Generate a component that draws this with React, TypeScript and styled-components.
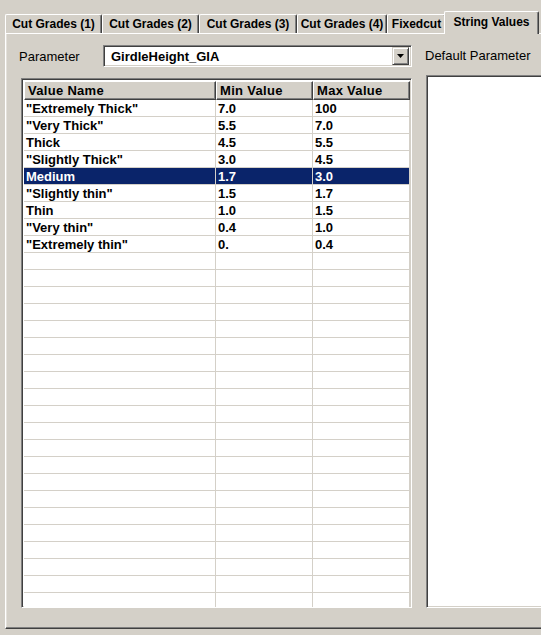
import styled, { createGlobalStyle } from 'styled-components';

const GlobalStyle = createGlobalStyle`
  html, body {
    margin: 0;
    padding: 0;
    background: #d4d0c8;
    overflow: hidden;
  }
  body {
    font-family: "Liberation Sans", Arial, sans-serif;
    color: #000;
  }
`;

interface RowData {
  name: string;
  min: string;
  max: string;
}

const rows: RowData[] = [
  { name: '"Extremely Thick"', min: '7.0', max: '100' },
  { name: '"Very Thick"', min: '5.5', max: '7.0' },
  { name: 'Thick', min: '4.5', max: '5.5' },
  { name: '"Slightly Thick"', min: '3.0', max: '4.5' },
  { name: 'Medium', min: '1.7', max: '3.0' },
  { name: '"Slightly thin"', min: '1.5', max: '1.7' },
  { name: 'Thin', min: '1.0', max: '1.5' },
  { name: '"Very thin"', min: '0.4', max: '1.0' },
  { name: '"Extremely thin"', min: '0.', max: '0.4' },
];

const SELECTED = 4;
const TOTAL_ROWS = 30;

const tabs = [
  { label: 'Cut Grades (1)', width: 97 },
  { label: 'Cut Grades (2)', width: 97 },
  { label: 'Cut Grades (3)', width: 98 },
  { label: 'Cut Grades (4)', width: 90 },
  { label: 'Fixedcut', width: 59 },
  { label: 'String Values', width: 95, active: true },
];

const Window = styled.div`
  width: 541px;
  height: 635px;
  padding-top: 11px;
  box-sizing: border-box;
  overflow: hidden;
`;

const TabRow = styled.div`
  display: flex;
  align-items: flex-end;
  padding-left: 5px;
  height: 22px;
  position: relative;
  z-index: 2;
`;

const Tab = styled.div<{ $width: number; $active?: boolean }>`
  box-sizing: border-box;
  flex: none;
  width: ${(p) => p.$width}px;
  height: ${(p) => (p.$active ? 23 : 19)}px;
  margin: ${(p) => (p.$active ? '0 -1px -1px -2px' : '0')};
  padding-top: ${(p) => (p.$active ? 3 : 2)}px;
  background: #d4d0c8;
  border-top: 1px solid #fff;
  border-left: 1px solid #fff;
  border-right: 1px solid #404040;
  box-shadow: inset -1px 0 0 #808080;
  border-radius: 2px 2px 0 0;
  font-size: 12px;
  font-weight: bold;
  text-align: center;
  white-space: nowrap;
  overflow: hidden;
`;

const Panel = styled.div`
  margin-left: 5px;
  height: 596px;
  box-sizing: border-box;
  border-top: 1px solid #fff;
  border-left: 1px solid #fff;
  border-bottom: 1px solid #404040;
  box-shadow: inset 0 -1px 0 #808080, inset 1px 0 0 #e4e1db;
  display: flex;
  padding: 11px 0 0 13px;
`;

const LeftCol = styled.div`
  width: 393px;
  display: flex;
  flex-direction: column;
`;

const ParamRow = styled.div`
  display: flex;
  align-items: center;
  height: 22px;
`;

const Label = styled.div`
  font-size: 13px;
  width: 84px;
  flex: none;
`;

const Combo = styled.div`
  box-sizing: border-box;
  width: 309px;
  height: 22px;
  background: #fff;
  border-top: 1px solid #808080;
  border-left: 1px solid #808080;
  border-right: 1px solid #fff;
  border-bottom: 1px solid #fff;
  box-shadow: inset 1px 1px 0 #404040, inset -1px -1px 0 #d4d0c8;
  display: flex;
  align-items: center;
  padding: 0 2px 0 7px;
  font-size: 13px;
  font-weight: bold;
`;

const ComboText = styled.div`
  flex: 1;
`;

const DropButton = styled.div`
  box-sizing: border-box;
  width: 17px;
  height: 18px;
  background: #d4d0c8;
  border-top: 1px solid #d4d0c8;
  border-left: 1px solid #d4d0c8;
  border-right: 1px solid #404040;
  border-bottom: 1px solid #404040;
  box-shadow: inset 1px 1px 0 #fff, inset -1px -1px 0 #808080;
  display: flex;
  align-items: center;
  justify-content: center;
`;

const Grid = styled.div`
  margin: 11px 0 0 2px;
  width: 391px;
  height: 530px;
  box-sizing: border-box;
  background: #fff;
  border-top: 1px solid #808080;
  border-left: 1px solid #808080;
  border-right: 1px solid #fff;
  border-bottom: 1px solid #fff;
  box-shadow: inset 1px 1px 0 #404040, inset -1px -1px 0 #d4d0c8;
  padding: 2px 2px 1px 2px;
  overflow: hidden;
`;

const GridRow = styled.div<{ $selected?: boolean }>`
  display: grid;
  grid-template-columns: 192px 97px 97px;
  height: 17px;
  background: ${(p) => (p.$selected ? '#0a246a' : '#fff')};
  color: ${(p) => (p.$selected ? '#fff' : '#000')};
`;

const HeaderRow = styled.div`
  display: grid;
  grid-template-columns: 192px 97px 97px;
  height: 19px;
`;

const HeaderCell = styled.div`
  box-sizing: border-box;
  background: #d4d0c8;
  border-top: 1px solid #fff;
  border-left: 1px solid #fff;
  border-right: 1px solid #404040;
  border-bottom: 1px solid #404040;
  box-shadow: inset -1px -1px 0 #808080;
  font-size: 13px;
  font-weight: bold;
  letter-spacing: 0.3px;
  padding: 1px 0 0 3px;
  white-space: nowrap;
  overflow: hidden;
`;

const Cell = styled.div`
  box-sizing: border-box;
  border-right: 1px solid #d4d0c8;
  border-bottom: 1px solid #d4d0c8;
  font-size: 13px;
  font-weight: bold;
  line-height: 17px;
  padding-left: 2px;
  white-space: nowrap;
  overflow: hidden;
`;

const RightCol = styled.div`
  flex: 1;
  margin-left: 13px;
  display: flex;
  flex-direction: column;
`;

const RightLabel = styled.div`
  font-size: 13px;
  height: 22px;
  line-height: 22px;
  white-space: nowrap;
`;

const DefaultBox = styled.div`
  margin: 8px -20px 0 1px;
  height: 533px;
  box-sizing: border-box;
  background: #fff;
  border-top: 1px solid #808080;
  border-left: 1px solid #808080;
  border-bottom: 1px solid #fff;
  box-shadow: inset 1px 1px 0 #404040, inset 0 -1px 0 #d4d0c8;
`;

const App = () => {
  const allRows: (RowData | null)[] = Array.from({ length: TOTAL_ROWS }, (_, i) => rows[i] ?? null);

  return (
    <>
      <GlobalStyle />
      <Window>
        <TabRow>
          {tabs.map((t) => (
            <Tab key={t.label} $width={t.width} $active={t.active}>
              {t.label}
            </Tab>
          ))}
        </TabRow>
        <Panel>
          <LeftCol>
            <ParamRow>
              <Label>Parameter</Label>
              <Combo>
                <ComboText>GirdleHeight_GIA</ComboText>
                <DropButton>
                  <svg width="7" height="4" viewBox="0 0 7 4">
                    <path d="M0 0h7L3.5 4z" fill="#000" />
                  </svg>
                </DropButton>
              </Combo>
            </ParamRow>
            <Grid>
              <HeaderRow>
                <HeaderCell>Value Name</HeaderCell>
                <HeaderCell>Min Value</HeaderCell>
                <HeaderCell>Max Value</HeaderCell>
              </HeaderRow>
              {allRows.map((r, i) => (
                <GridRow key={i} $selected={i === SELECTED}>
                  <Cell>{r?.name}</Cell>
                  <Cell>{r?.min}</Cell>
                  <Cell>{r?.max}</Cell>
                </GridRow>
              ))}
            </Grid>
          </LeftCol>
          <RightCol>
            <RightLabel>Default Parameter</RightLabel>
            <DefaultBox />
          </RightCol>
        </Panel>
      </Window>
    </>
  );
};

export default App;
